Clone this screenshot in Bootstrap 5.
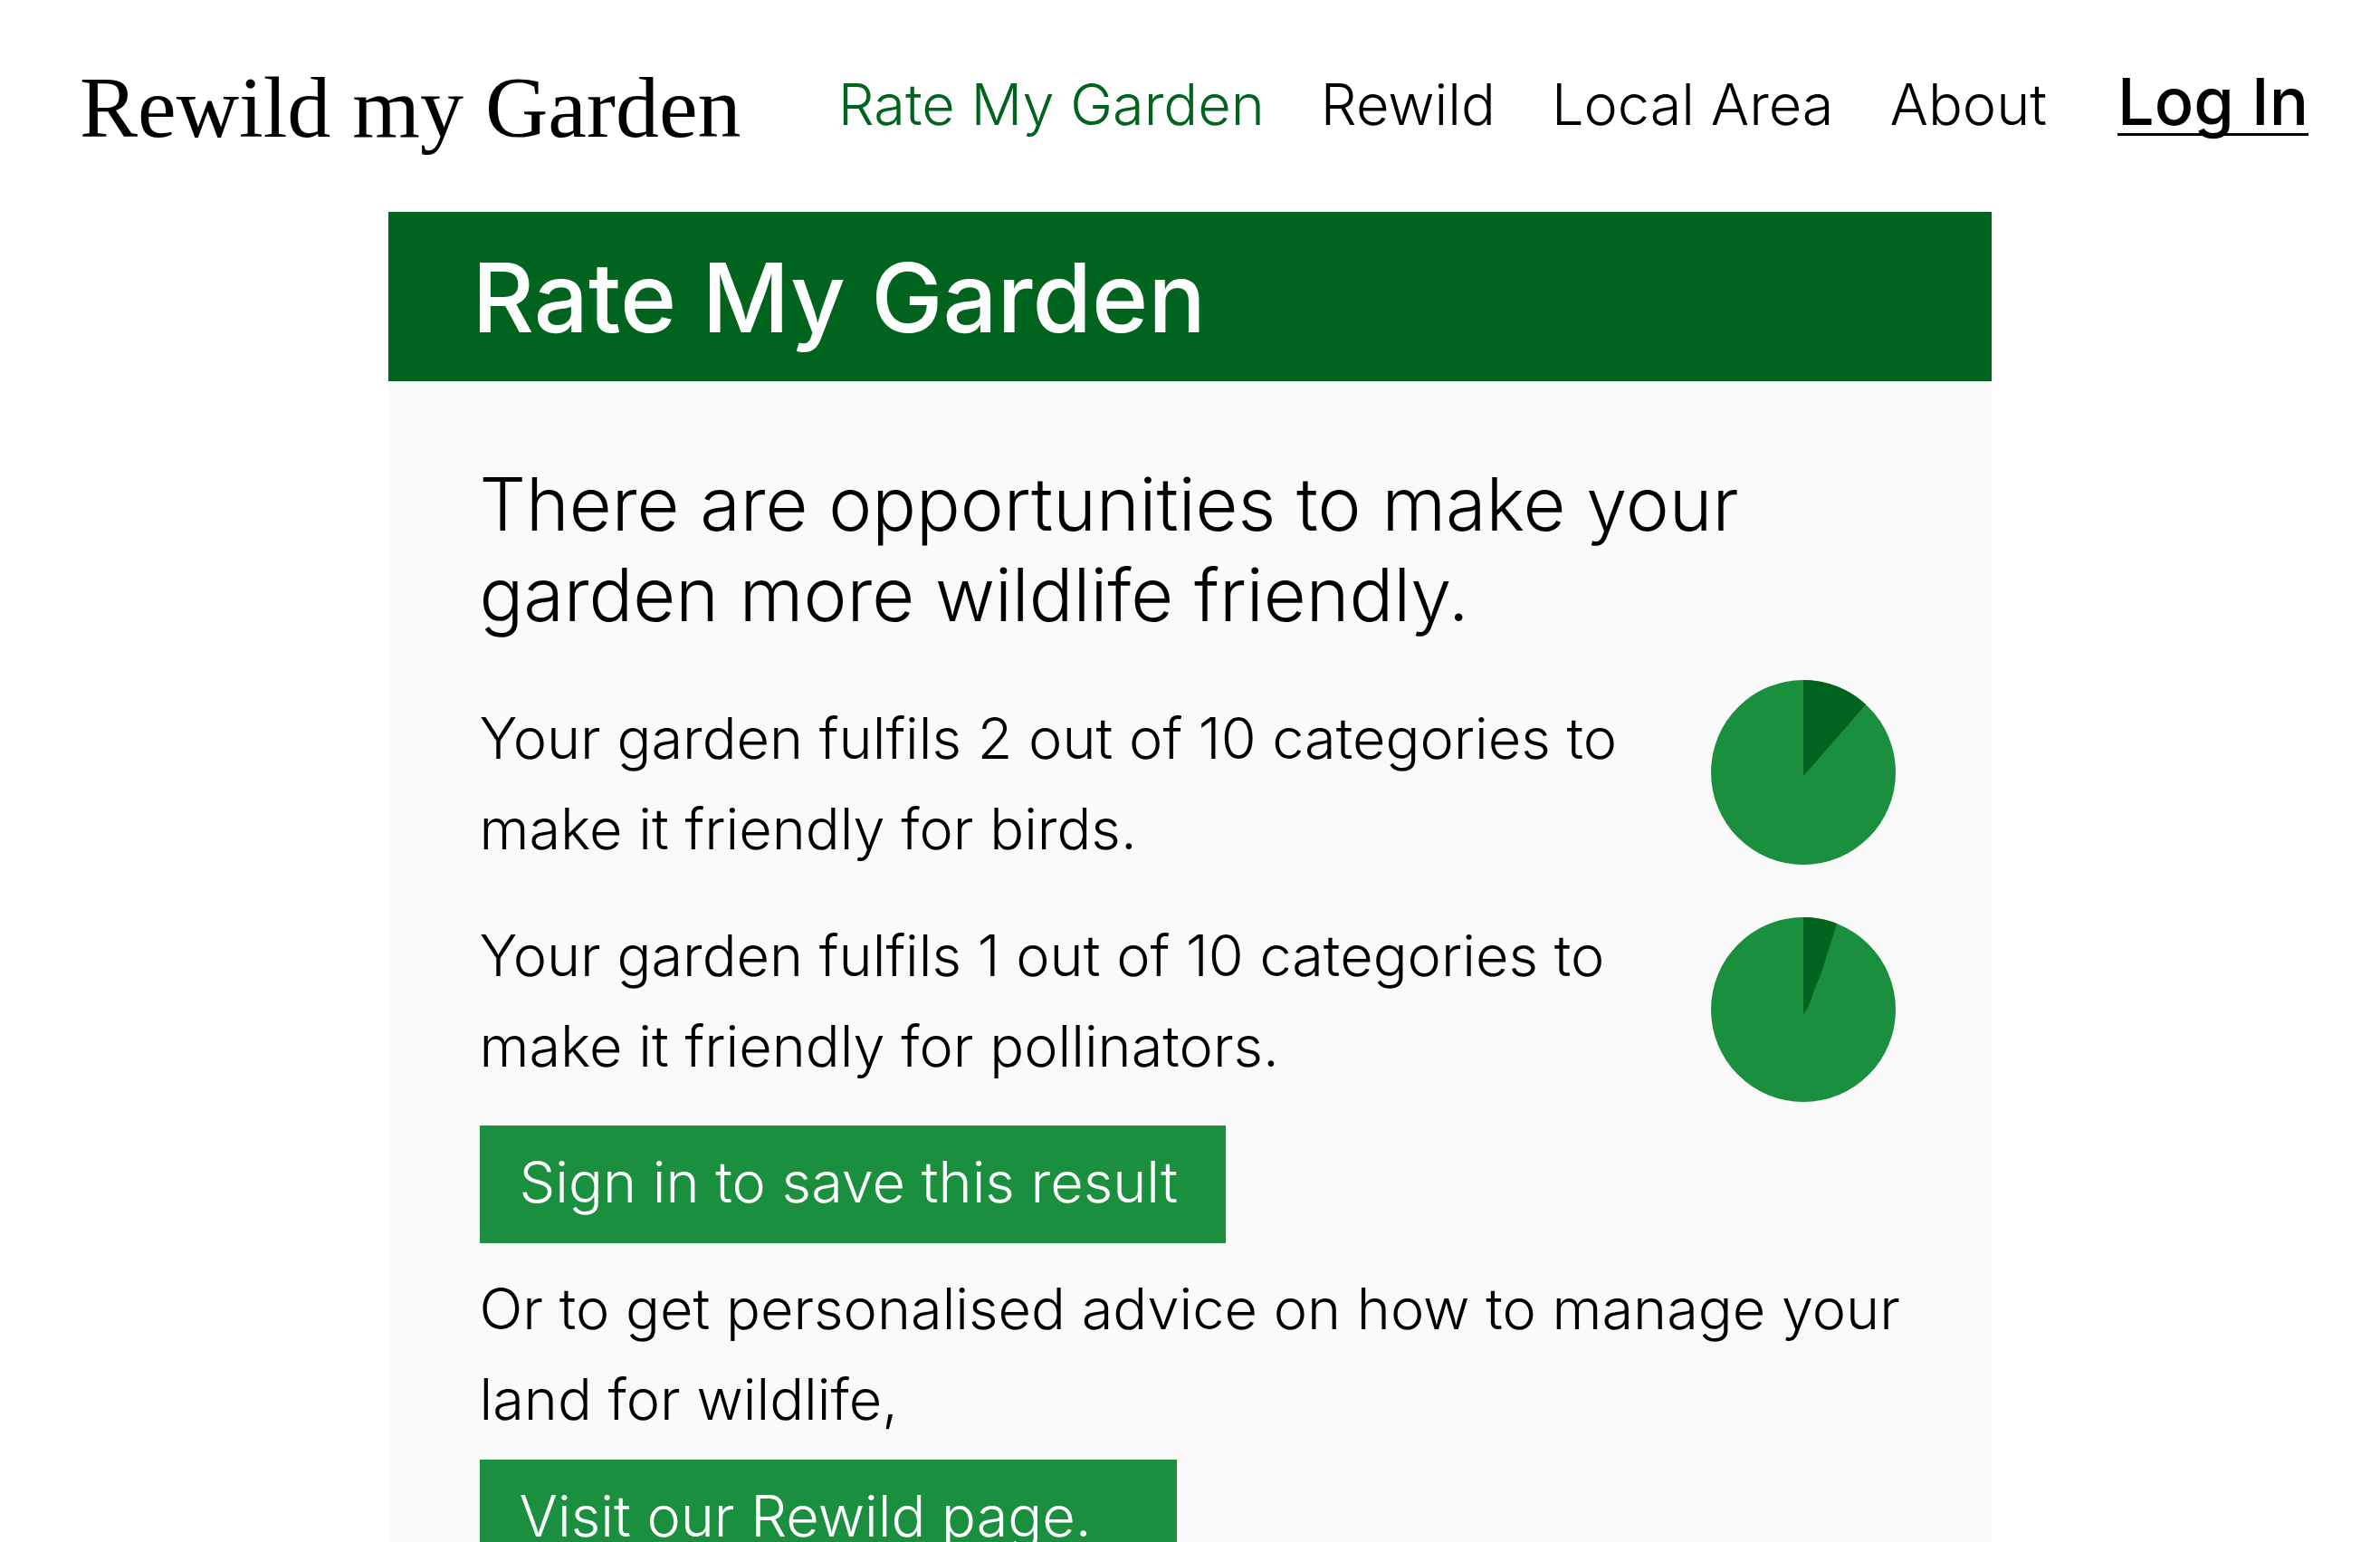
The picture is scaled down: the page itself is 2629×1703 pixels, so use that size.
<!DOCTYPE html>
<html lang="en">
<head>
<meta charset="utf-8">
<meta name="viewport" content="width=device-width, initial-scale=1">
<title>Rewild my Garden</title>
<link href="https://cdn.jsdelivr.net/npm/bootstrap@5.3.0/dist/css/bootstrap.min.css" rel="stylesheet">
<style>
  :root { --forest: #00641e; --leaf: #1a8f3e; --paper: #fafafa; }
  body { font-family: Inter, "Open Sans", sans-serif; font-size: 63px; font-weight: 300; line-height: 100px; color: #000; background: #fff; }
  .site-bar { min-height: 234px; padding: 0 79px 4px 88px; }
  .site-bar .navbar-brand { font-family: "Liberation Serif", serif; font-size: 96px; font-weight: 400; line-height: 120px; color: #000; padding: 8px 0 0; margin: 0; }
  .site-links { gap: 62px; }
  .site-links .nav-link { color: #000; padding: 0; line-height: 76px; }
  .site-links .nav-link.active { color: var(--forest); }
  .site-links .login-link { font-size: 72px; font-weight: 500; border-bottom: 3px solid #000; line-height: 70px; margin-left: 16px; }
  .panel { width: 67.4%; background: var(--paper); }
  .panel-title { background: var(--forest); padding: 35px 93px 33px; }
  .panel-title h1 { font-size: 106px; font-weight: 500; line-height: 119px; }
  .panel-main { padding: 86px 101px 0; }
  .intro { font-size: 81px; line-height: 100px; font-weight: 300; }
  .scores { margin: 44px 0 26px; }
  .score-texts { gap: 40px; padding-top: 14px; }
  .score-pies { gap: 58px; margin-right: 5px; }
  .pie { width: 204px; height: 204px; }
  .btn-leaf { --bs-btn-color: #fff; --bs-btn-bg: var(--leaf); --bs-btn-border-color: var(--leaf); --bs-btn-hover-color: #fff; --bs-btn-hover-bg: var(--forest); --bs-btn-hover-border-color: var(--forest); --bs-btn-font-size: 63px; --bs-btn-font-weight: 300; --bs-btn-line-height: 100px; padding: 11px 43px 17px; }
  .btn-save { min-width: 824px; }
  .btn-visit { min-width: 770px; }
  .advice { margin: 22px 0 17px; }
</style>
</head>
<body>
<header class="navbar site-bar">
  <div class="d-flex w-100 justify-content-between align-items-center">
    <a class="navbar-brand" href="#">Rewild my Garden</a>
    <nav class="nav site-links align-items-baseline" aria-label="Main">
      <a class="nav-link active" aria-current="page" href="#">Rate My Garden</a>
      <a class="nav-link" href="#">Rewild</a>
      <a class="nav-link" href="#">Local Area</a>
      <a class="nav-link" href="#">About</a>
      <a class="nav-link login-link" href="#">Log In</a>
    </nav>
  </div>
</header>
<main class="panel mx-auto">
  <div class="panel-title text-white">
    <h1 class="m-0">Rate My Garden</h1>
  </div>
  <div class="panel-main d-flex flex-column align-items-start">
    <h2 class="intro mb-0">There are opportunities to make your<br>garden more wildlife friendly.</h2>
    <section class="scores d-flex justify-content-between align-self-stretch">
      <div class="score-texts d-flex flex-column">
        <p class="mb-0">Your garden fulfils 2 out of 10 categories to<br>make it friendly for birds.</p>
        <p class="mb-0">Your garden fulfils 1 out of 10 categories to<br>make it friendly for pollinators.</p>
      </div>
      <div class="score-pies d-flex flex-column flex-shrink-0">
        <svg class="pie" viewBox="0 0 204 204" role="img" aria-label="2 out of 10">
          <circle cx="102" cy="102" r="102" fill="#1a8f3e"/>
          <path d="M102 0A102 102 0 0 1 171 27L102 106Z" fill="#00641e"/>
        </svg>
        <svg class="pie" viewBox="0 0 204 204" role="img" aria-label="1 out of 10">
          <circle cx="102" cy="102" r="102" fill="#1a8f3e"/>
          <path d="M102 0A102 102 0 0 1 139 7L122 61L113 83L110 93Q105 104 102 107Z" fill="#00641e"/>
        </svg>
      </div>
    </section>
    <button type="button" class="btn btn-leaf btn-save rounded-0 text-start">Sign in to save this result</button>
    <p class="advice">Or to get personalised advice on how to manage your<br>land for wildlife,</p>
    <a class="btn btn-leaf btn-visit rounded-0 text-start" href="#">Visit our Rewild page.</a>
  </div>
</main>
<script src="https://cdn.jsdelivr.net/npm/bootstrap@5.3.0/dist/js/bootstrap.bundle.min.js"></script>
</body>
</html>
